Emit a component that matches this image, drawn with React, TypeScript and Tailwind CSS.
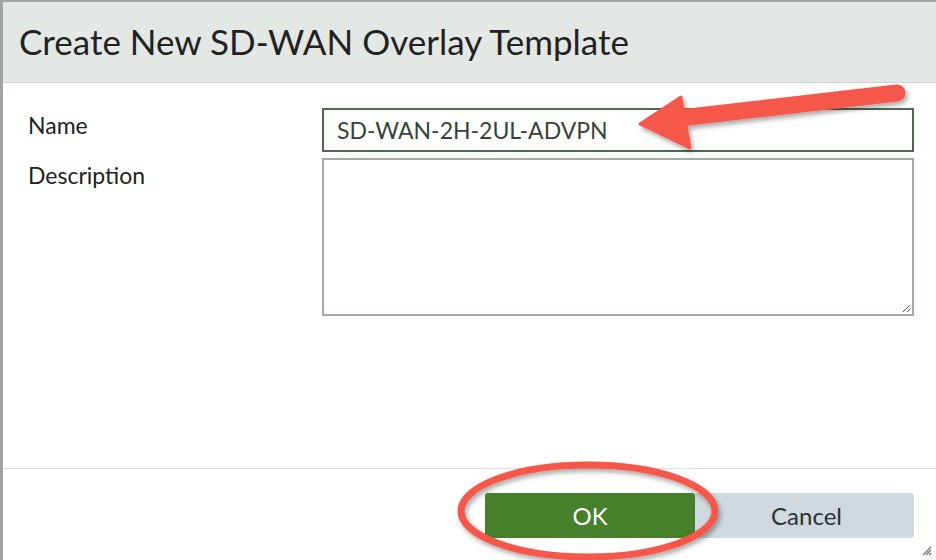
import React from 'react';

export default function App() {
  return (
    <div
      className="relative w-[936px] h-[560px] overflow-hidden bg-white flex flex-col border-l-[3px] border-t-2 border-[#a3a3a3]"
      style={{ fontFamily: 'Lato, "Open Sans", sans-serif' }}
    >
      <div className="h-[81px] shrink-0 bg-[#e4e8e5] border-b border-[#cfd3d0] flex items-center pl-[16px]">
        <h1 className="text-[35px] leading-none text-[#222] pb-[2px]">Create New SD-WAN Overlay Template</h1>
      </div>

      <div className="flex-1 flex flex-col pt-[25px] pl-[25px] pr-[22px]">
        <div className="flex">
          <label className="w-[294px] text-[23px] text-[#222] leading-none pt-[6px]">Name</label>
          <div className="flex-1 h-[44px] border-2 border-[#51674f] flex items-center pl-[13px] text-[23px] text-[#354535]">
            SD-WAN-2H-2UL-ADVPN
          </div>
        </div>
        <div className="flex mt-[6px]">
          <label className="w-[294px] text-[23px] text-[#222] leading-none pt-[6px]">Description</label>
          <div className="relative flex-1 h-[158px] border-2 border-[#a0ad9f]">
            <svg className="absolute right-[1px] bottom-[1px]" width="10" height="10" viewBox="0 0 10 10">
              <path d="M9 2 L2 9 M9 6 L6 9" stroke="#555" strokeWidth="1" />
            </svg>
          </div>
        </div>
      </div>

      <div className="h-[92px] shrink-0 border-t border-[#dedede] flex justify-end items-start pt-[24px] pr-[22px]">
        <button className="w-[210px] h-[45px] bg-[#46802a] text-white text-[24px] rounded-[3px]">OK</button>
        <button className="w-[219px] h-[45px] bg-[#d0d9df] text-[#2b3233] text-[24px] rounded-[3px] pl-[4px]">Cancel</button>
      </div>

      <svg className="absolute right-[4px] bottom-[4px]" width="12" height="12" viewBox="0 0 12 12">
        <path d="M11 3 L3 11 M11 6 L6 11 M11 9 L9 11" stroke="#777" strokeWidth="1.3" />
      </svg>

      <svg className="absolute left-[-3px] top-[-2px] pointer-events-none" width="936" height="560" viewBox="0 0 936 560">
        <defs>
          <filter id="sh" x="-20%" y="-20%" width="140%" height="140%">
            <feDropShadow dx="2" dy="3" stdDeviation="2.5" floodColor="#000" floodOpacity="0.35" />
          </filter>
        </defs>
        <g filter="url(#sh)">
          <line x1="897" y1="93" x2="672" y2="119" stroke="#f5584b" strokeWidth="17" strokeLinecap="round" />
          <polygon points="640,124 681,97 690,148" fill="#f5584b" stroke="#f5584b" strokeWidth="3" strokeLinejoin="round" />
          <ellipse cx="588" cy="511" rx="127" ry="46" fill="none" stroke="#f5584b" strokeWidth="7" />
        </g>
      </svg>
    </div>
  );
}
